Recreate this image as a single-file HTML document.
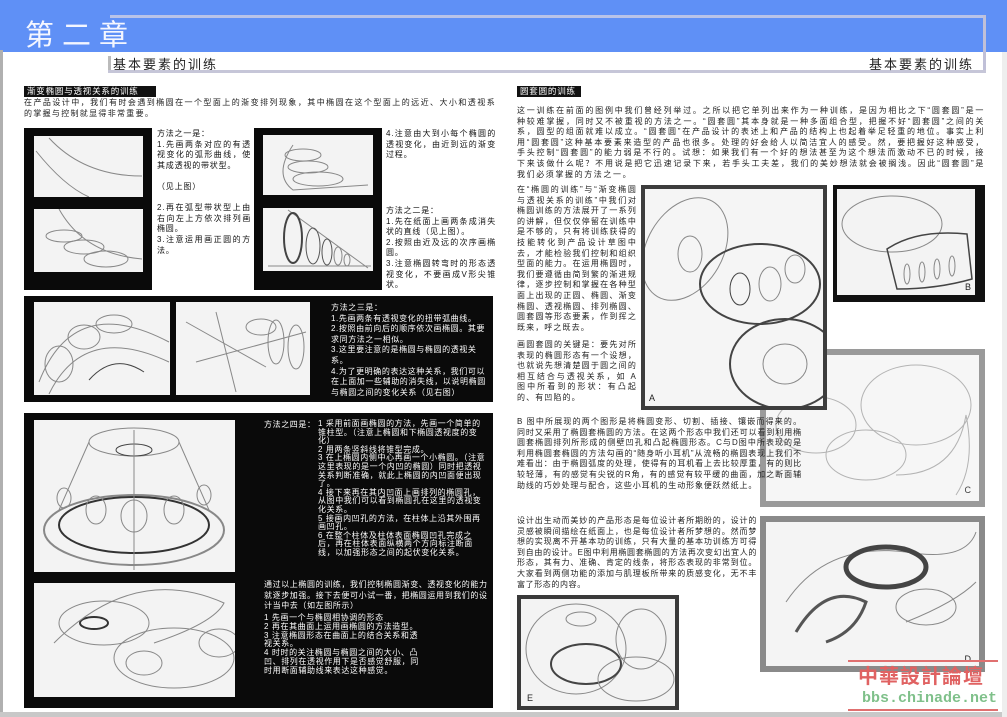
<!DOCTYPE html>
<html><head><meta charset="utf-8">
<style>
*{margin:0;padding:0;box-sizing:border-box}
body{width:1007px;height:717px;position:relative;overflow:hidden;background:#fff;font-family:"Liberation Sans","Noto Sans CJK SC",sans-serif;color:#222}
.a{position:absolute}
.t{font-size:8px;line-height:10.6px;letter-spacing:1.1px;text-align:justify;z-index:5}
.w{color:#fff;font-size:8px;line-height:10.6px;letter-spacing:0.6px}
.blk{background:#0a0a0a}
.img{background:#f3f3f3;overflow:hidden}
.img svg{width:100%;height:100%}
.lab{background:#111;color:#fff;font-size:8.5px;line-height:11px;padding:0 3px;letter-spacing:0.8px}
svg *{fill:none;stroke:#888;stroke-width:1}
</style></head><body>
<!-- header -->
<div class="a" style="left:0;top:0;width:1007px;height:52px;background:#5f90f6"></div>
<div class="a" style="left:110px;top:15px;width:876px;height:3px;background:#b9c3e8"></div>
<div class="a" style="left:983px;top:15px;width:3px;height:57px;background:#c0c0d8"></div>
<div class="a" style="left:25px;top:17px;color:#f4f6ff;font-size:29px;letter-spacing:8px;line-height:32px;font-family:'Noto Sans CJK SC',sans-serif">第二章</div>
<div class="a" style="left:108px;top:56px;width:3px;height:16px;background:#bbb"></div>
<div class="a" style="left:108px;top:70px;width:878px;height:3px;background:#c6c6d8"></div>
<div class="a" style="left:113px;top:54px;font-size:13px;letter-spacing:2px;color:#222">基本要素的训练</div>
<div class="a" style="left:869px;top:54px;font-size:13px;letter-spacing:2px;color:#222">基本要素的训练</div>
<div class="a" style="left:0;top:50px;width:3px;height:667px;background:#b0b0b0"></div>
<div class="a" style="left:0;top:712px;width:1007px;height:5px;background:#c8c8c8"></div>
<div class="a" style="left:1002px;top:52px;width:5px;height:665px;background:#eee"></div>

<!-- left page -->
<div class="a lab" style="left:24px;top:86px;width:132px">渐变椭圆与透视关系的训练</div>
<div class="a t" style="left:24px;top:98px;width:472px;letter-spacing:1.3px">在产品设计中，我们有时会遇到椭圆在一个型面上的渐变排列现象，其中椭圆在这个型面上的远近、大小和透视系的掌握与控制就显得非常重要。</div>

<div class="a blk" style="left:24px;top:128px;width:128px;height:162px"></div>
<div class="a img" style="left:34px;top:136px;width:109px;height:61px"><svg viewBox="0 0 109 61"><path d="M15 2 Q50 40 108 40"/><path d="M2 15 Q30 50 55 61"/></svg></div>
<div class="a img" style="left:34px;top:209px;width:109px;height:63px"><svg viewBox="0 0 109 63"><path d="M25 0 Q50 45 108 50"/><ellipse cx="30" cy="27" rx="18" ry="6"/><ellipse cx="50" cy="38" rx="20" ry="7"/><ellipse cx="72" cy="50" rx="22" ry="8"/></svg></div>
<div class="a t" style="left:157px;top:129px;width:94px;color:#111;letter-spacing:0.8px">方法之一是：<br>1.先画两条对应的有透视变化的弧形曲线，使其成透视的带状型。<br><br>（见上图）<br><br>2.再在弧型带状型上由右向左上方依次排列画椭圆。<br>3.注意运用画正圆的方法。</div>

<div class="a blk" style="left:254px;top:128px;width:128px;height:162px"></div>
<div class="a img" style="left:263px;top:135px;width:110px;height:60px"><svg viewBox="0 0 110 60"><path d="M30 10 Q10 40 30 55 L105 50"/><ellipse cx="40" cy="20" rx="18" ry="6"/><ellipse cx="45" cy="32" rx="20" ry="6"/><ellipse cx="55" cy="44" rx="25" ry="7"/></svg></div>
<div class="a img" style="left:263px;top:208px;width:110px;height:63px"><svg viewBox="0 0 110 63"><path d="M25 2 L105 60 M5 58 L108 58"/><ellipse cx="30" cy="30" rx="9" ry="25" style="stroke-width:2;stroke:#444"/><ellipse cx="50" cy="38" rx="7" ry="18" style="stroke:#555"/><ellipse cx="64" cy="44" rx="5" ry="13" style="stroke:#555"/><ellipse cx="75" cy="48" rx="4" ry="9"/><ellipse cx="84" cy="52" rx="3" ry="6"/></svg></div>
<div class="a t" style="left:386px;top:129px;width:110px;color:#111;letter-spacing:0.8px">4.注意由大到小每个椭圆的透视变化，由近到远的渐变过程。</div>
<div class="a t" style="left:386px;top:206px;width:110px;color:#111;letter-spacing:0.8px">方法之二是：<br>1.先在纸面上画两条成消失状的直线（见上图）。<br>2.按照由近及远的次序画椭圆。<br>3.注意椭圆转弯时的形态透视变化，不要画成V形尖锥状。</div>

<div class="a blk" style="left:24px;top:296px;width:469px;height:106px"></div>
<div class="a img" style="left:34px;top:302px;width:136px;height:93px"><svg viewBox="0 0 136 93"><path d="M5 80 Q40 -10 135 40"/><path d="M15 92 Q50 20 135 60"/><ellipse cx="25" cy="62" rx="14" ry="18"/><ellipse cx="50" cy="35" rx="16" ry="12"/><ellipse cx="80" cy="22" rx="18" ry="9"/><path d="M55 78 Q80 50 110 70" style="stroke:#444"/></svg></div>
<div class="a img" style="left:176px;top:302px;width:134px;height:93px"><svg viewBox="0 0 134 93"><path d="M10 20 L90 65 M20 60 L130 30 M40 10 L60 90"/><ellipse cx="85" cy="25" rx="15" ry="8"/><ellipse cx="100" cy="40" rx="8" ry="22"/><ellipse cx="120" cy="45" rx="8" ry="22"/></svg></div>
<div class="a w" style="left:331px;top:303px;width:160px">方法之三是：<br>1.先画两条有透视变化的扭带弧曲线。<br>2.按照由前向后的顺序依次画椭圆。其要求同方法之一相似。<br>3.这里要注意的是椭圆与椭圆的透视关系。<br>4.为了更明确的表达这种关系，我们可以在上面加一些辅助的消失线，以说明椭圆与椭圆之间的变化关系（见右图）</div>

<div class="a blk" style="left:24px;top:413px;width:469px;height:295px"></div>
<div class="a img" style="left:34px;top:420px;width:201px;height:152px"><svg viewBox="0 0 201 152"><ellipse cx="100" cy="110" rx="90" ry="35" style="stroke-width:2"/><ellipse cx="100" cy="105" rx="75" ry="28" style="stroke-width:2;stroke:#333"/><ellipse cx="100" cy="22" rx="45" ry="14"/><ellipse cx="100" cy="30" rx="18" ry="6" style="stroke:#444"/><path d="M55 22 L25 90 M145 22 L175 90 M100 10 L100 150"/><ellipse cx="62" cy="90" rx="10" ry="14"/><ellipse cx="100" cy="96" rx="13" ry="16"/><ellipse cx="140" cy="90" rx="10" ry="14"/><ellipse cx="170" cy="75" rx="7" ry="10"/><ellipse cx="30" cy="78" rx="7" ry="10"/></svg></div>
<div class="a img" style="left:34px;top:583px;width:201px;height:114px"><svg viewBox="0 0 201 114"><ellipse cx="70" cy="40" rx="45" ry="22"/><ellipse cx="60" cy="40" rx="14" ry="6" style="stroke:#333;stroke-width:2"/><path d="M20 60 Q100 -20 190 20 Q180 40 120 60"/><ellipse cx="140" cy="75" rx="60" ry="30"/><ellipse cx="185" cy="60" rx="20" ry="14"/><ellipse cx="110" cy="80" rx="18" ry="12"/></svg></div>
<div class="a w" style="left:264px;top:420px;width:64px">方法之四是：</div>
<div class="a w" style="left:318px;top:420px;width:170px;line-height:8.6px">1 采用前面画椭圆的方法，先画一个简单的锥柱型。（注意上椭圆和下椭圆透视度的变化）<br>2 用两条竖斜线将锥型完成。<br>3 在上椭圆内侧中心再画一个小椭圆。（注意这里表现的是一个内凹的椭圆）同时把透视关系判断准确，就此上椭圆的内凹面便出现了。<br>4 接下来再在其内凹面上画排列的椭圆孔，从图中我们可以看到椭圆孔在这里的透视变化关系。<br>5 接画内凹孔的方法，在柱体上沿其外围再画凹孔。<br>6 在整个柱体及柱体表面椭圆凹孔完成之后，再在柱体表面纵横两个方向标注断面线，以加强形态之间的起伏变化关系。</div>
<div class="a w" style="left:264px;top:580px;width:224px">通过以上椭圆的训练，我们控制椭圆渐变、透视变化的能力就逐步加强。接下去便可小试一番，把椭圆运用到我们的设计当中去（如左图所示）</div>
<div class="a w" style="left:264px;top:614px;width:156px;line-height:8.8px">1 先画一个与椭圆相协调的形态<br>2 再在其曲面上运用画椭圆的方法造型。<br>3 注意椭圆形态在曲面上的结合关系和透视关系。<br>4 时时的关注椭圆与椭圆之间的大小、凸凹、排列在透视作用下是否感觉舒服，同时用断面辅助线来表达这种感觉。</div>

<!-- right page -->
<div class="a lab" style="left:517px;top:86px;width:64px">圆套圆的训练</div>
<div class="a t" style="left:517px;top:106px;width:468px;letter-spacing:1.6px">这一训练在前面的图例中我们曾经列举过。之所以把它单列出来作为一种训练，是因为相比之下“圆套圆”是一种较难掌握，同时又不被重视的方法之一。“圆套圆”其本身就是一种多面组合型，把握不好“圆套圆”之间的关系，圆型的组面就难以成立。“圆套圆”在产品设计的表述上和产品的结构上也起着举足轻重的地位。事实上利用“圆套圆”这种基本要素来造型的产品也很多。处理的好会给人以简洁宜人的感受。然，要把握好这种感受，手头控制“圆套圆”的能力弱是不行的。试想：如果我们有一个好的想法甚至为这个想法而激动不已的时候，接下来该做什么呢？不用说是把它迅速记录下来，若手头工夫差，我们的美妙想法就会被搁浅。因此“圆套圆”是我们必须掌握的方法之一。</div>
<div class="a t" style="left:517px;top:185px;width:120px">在“椭圆的训练”与“渐变椭圆与透视关系的训练”中我们对椭圆训练的方法展开了一系列的讲解，但仅仅停留在训练中是不够的，只有将训练获得的技能转化到产品设计草图中去，才能检验我们控制和组织型面的能力。在运用椭圆时，我们要遵循由简到繁的渐进规律，逐步控制和掌握在各种型面上出现的正圆、椭圆、渐变椭圆、透视椭圆、排列椭圆、圆套圆等形态要素，作到挥之既来，呼之既去。</div>
<div class="a t" style="left:517px;top:340px;width:120px">画圆套圆的关键是：要先对所表现的椭圆形态有一个设想，也就说先想清楚圆于圆之间的相互结合与透视关系，如 A 图中所看到的形状：有凸起的、有凹陷的。</div>

<div class="a" style="left:760px;top:349px;width:225px;height:158px;background:#9a9a9a"></div>
<div class="a img" style="left:766px;top:355px;width:213px;height:146px;background:#f6f6f6"><svg viewBox="0 0 213 146"><g style="opacity:.6"><ellipse cx="150" cy="50" rx="55" ry="40"/><ellipse cx="100" cy="100" rx="40" ry="25"/><ellipse cx="50" cy="70" rx="40" ry="28"/><path d="M130 120 Q190 120 200 60 Q210 110 190 140"/></g></svg><div class="a" style="right:8px;bottom:6px;font-size:9px;color:#444">C</div></div>

<div class="a" style="left:641px;top:185px;width:186px;height:225px;background:#3d3d3d"></div>
<div class="a img" style="left:645px;top:189px;width:178px;height:217px;background:#f5f5f5"><svg viewBox="0 0 178 217"><ellipse cx="40" cy="60" rx="38" ry="55" transform="rotate(30 40 60)"/><ellipse cx="45" cy="65" rx="12" ry="18"/><ellipse cx="115" cy="95" rx="60" ry="40" style="stroke-width:2;stroke:#444"/><ellipse cx="95" cy="100" rx="10" ry="16" style="stroke:#444"/><ellipse cx="125" cy="95" rx="11" ry="17"/><ellipse cx="150" cy="80" rx="10" ry="14"/><ellipse cx="140" cy="175" rx="55" ry="45" style="stroke-width:2;stroke:#444"/><ellipse cx="140" cy="175" rx="22" ry="20"/></svg><div class="a" style="left:4px;bottom:3px;font-size:9px;color:#222">A</div></div>

<div class="a" style="left:833px;top:185px;width:152px;height:117px;background:#111"></div>
<div class="a img" style="left:837px;top:189px;width:138px;height:106px"><svg viewBox="0 0 138 106"><ellipse cx="55" cy="35" rx="50" ry="28"/><path d="M50 60 Q80 40 130 45 L135 90 Q100 100 60 100 Z" style="stroke:#444;stroke-width:1.5"/><ellipse cx="70" cy="85" rx="3" ry="10"/><ellipse cx="85" cy="83" rx="3" ry="10"/><ellipse cx="100" cy="80" rx="3" ry="10"/><ellipse cx="115" cy="77" rx="3" ry="10"/></svg><div class="a" style="right:4px;bottom:3px;font-size:9px;color:#222">B</div></div>

<div class="a t" style="left:517px;top:417px;width:285px;letter-spacing:0.9px">B 图中所展现的两个图形是将椭圆变形、切割、插接、镶嵌而得来的。同时又采用了椭圆套椭圆的方法。在这两个形态中我们还可以看到利用椭圆套椭圆排列所形成的侧壁凹孔和凸起椭圆形态。C与D图中所表现的是利用椭圆套椭圆的方法勾画的“随身听小耳机”从流畅的椭圆表现上我们不难看出：由于椭圆弧度的处理，使得有的耳机看上去比较厚重，有的则比较轻薄，有的感觉有尖锐的R角，有的感觉有较平缓的曲面，加之断面辅助线的巧妙处理与配合，这些小耳机的生动形象便跃然纸上。</div>

<div class="a" style="left:760px;top:516px;width:225px;height:156px;background:#8a8a8a"></div>
<div class="a img" style="left:766px;top:522px;width:213px;height:144px;background:#f4f4f4"><svg viewBox="0 0 213 144"><path d="M20 80 Q60 20 140 30 Q200 40 210 10"/><ellipse cx="120" cy="45" rx="40" ry="20" style="stroke:#444;stroke-width:5"/><path d="M30 110 Q60 60 100 80 Q90 110 60 120" style="stroke:#555;stroke-width:3"/><ellipse cx="160" cy="85" rx="30" ry="18"/><path d="M140 100 Q190 80 210 60"/></svg><div class="a" style="right:8px;bottom:2px;font-size:9px;color:#222">D</div></div>
<div class="a t" style="left:517px;top:516px;width:240px;letter-spacing:0.6px">设计出生动而美妙的产品形态是每位设计者所期盼的，设计的灵感被瞬间描绘在纸面上，也是每位设计者所梦想的。然而梦想的实现离不开基本功的训练，只有大量的基本功训练方可得到自由的设计。E图中利用椭圆套椭圆的方法再次变幻出宜人的形态，其有力、准确、肯定的线条，将形态表现的非常到位。大家看到两侧功能的添加与肌理板所带来的质感变化，无不丰富了形态的内容。</div>

<div class="a" style="left:517px;top:595px;width:162px;height:115px;background:#3a3a3a"></div>
<div class="a img" style="left:521px;top:599px;width:154px;height:107px"><svg viewBox="0 0 154 107"><ellipse cx="55" cy="50" rx="50" ry="45"/><ellipse cx="65" cy="65" rx="35" ry="20" style="stroke:#444;stroke-width:2"/><ellipse cx="60" cy="20" rx="15" ry="7"/><ellipse cx="120" cy="40" rx="25" ry="30"/><ellipse cx="115" cy="80" rx="38" ry="22"/></svg><div class="a" style="left:6px;bottom:3px;font-size:9px;color:#222">E</div></div>

<!-- watermark -->
<div class="a" style="left:848px;top:660px;width:150px;height:2px;background:#e07070"></div>
<div class="a" style="left:848px;top:709px;width:150px;height:2px;background:#e07070"></div>
<div class="a" style="left:858px;top:663px;font-size:20px;font-weight:bold;color:#e06262;letter-spacing:1px;line-height:24px;font-family:'Noto Sans CJK TC',sans-serif">中華設計論壇</div>
<div class="a" style="left:862px;top:690px;font-size:15px;font-weight:bold;color:#7fc08a;font-family:'Liberation Mono',monospace;line-height:18px">bbs.chinade.net</div>
</body></html>
